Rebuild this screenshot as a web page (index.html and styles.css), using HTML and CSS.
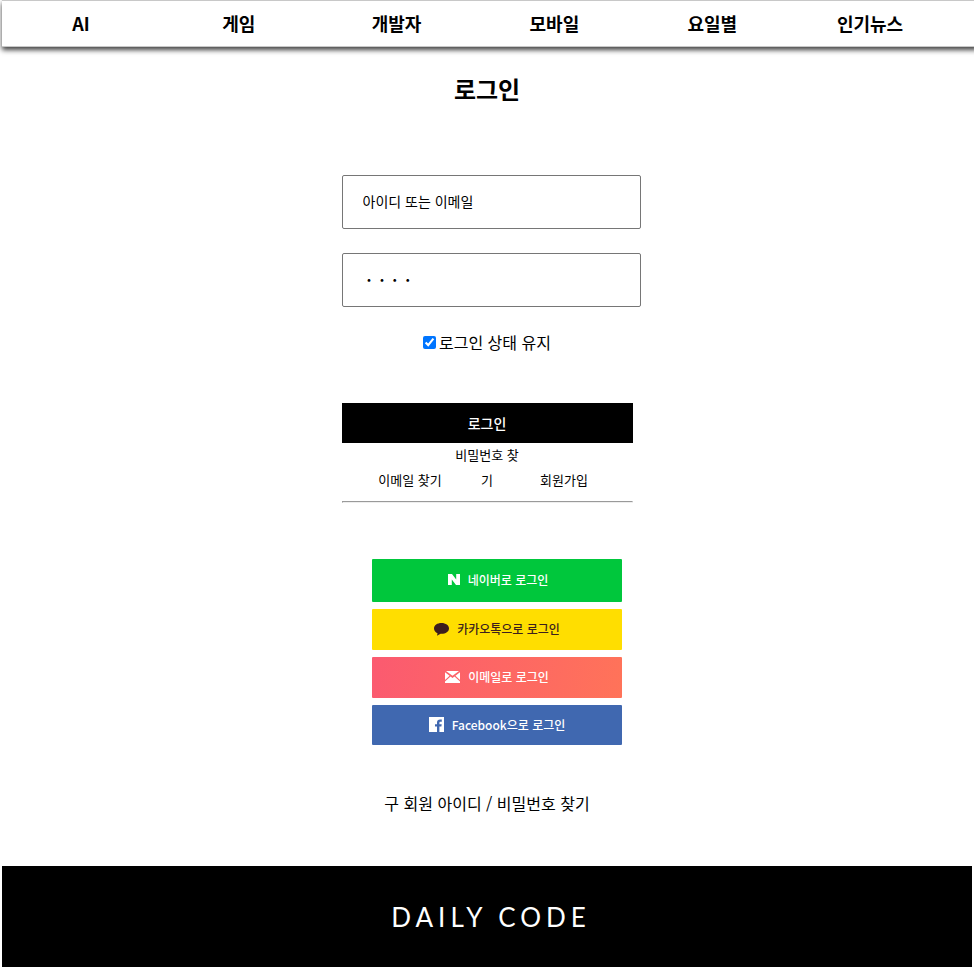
FILE: index.html
```html
<!DOCTYPE html>
<html lang="ko">
<head>
<meta charset="utf-8">
<meta name="viewport" content="width=device-width, initial-scale=1">
<title>로그인 - DAILY CODE</title>
<link rel="stylesheet" href="styles.css">
</head>
<body>
<nav class="nav">
  <a href="#">AI</a>
  <a href="#">게임</a>
  <a href="#">개발자</a>
  <a href="#">모바일</a>
  <a href="#">요일별</a>
  <a href="#">인기뉴스</a>
</nav>
<main class="main">
  <h1 class="title">로그인</h1>
  <form class="form">
    <input class="field" type="text" placeholder="아이디 또는 이메일" aria-label="아이디 또는 이메일">
    <input class="field field-password" type="password" placeholder="ㆍㆍㆍㆍ" aria-label="비밀번호">
    <div class="keep">
      <input id="keep" type="checkbox" checked>
      <label for="keep">로그인 상태 유지</label>
    </div>
    <button class="submit" type="submit">로그인</button>
    <div class="links">
      <a href="#">이메일 찾기</a>
      <a href="#">비밀번호 찾기</a>
      <a href="#">회원가입</a>
    </div>
    <hr class="rule">
  </form>
  <div class="social">
    <button class="naver" type="button">
      <svg width="12" height="11" viewBox="0 0 12 11" aria-hidden="true"><path fill="currentColor" d="M0 0h4l4.200 5.500V0H12v11H8L3.800 5.500V11H0z"/></svg>
      네이버로 로그인
    </button>
    <button class="kakao" type="button">
      <svg width="15" height="14" viewBox="0 0 15 14" aria-hidden="true"><path fill="currentColor" d="M7.500 1C3.300 1 0 3.200 0 6.400c0 2.100 1.400 3.900 3.500 4.800L3 13.800l3.600-2h.9c4.200 0 7.500-2.300 7.500-5.400S11.700 1 7.500 1z"/></svg>
      카카오톡으로 로그인
    </button>
    <button class="email" type="button">
      <svg width="15" height="12" viewBox="0 0 15 12" aria-hidden="true"><path fill="currentColor" d="M1 0h13l-6.500 4.800zM0 1.200l4.600 3.500L0 9zM15 1.200v7.800l-4.600-4.300zM5.500 5.500l2 1.400 2-1.400 5.500 5.100V12H0v-1.400z"/></svg>
      이메일로 로그인
    </button>
    <button class="facebook" type="button">
      <svg width="15" height="15" viewBox="0 0 15 15" aria-hidden="true"><path fill="currentColor" d="M0 0h15v15h-4.600V9.400h2l.3-2.200h-2.300V5.800c0-.7.300-1.100 1.100-1.100h1.300V2.600l-1.700-.1c-2 0-3.100 1.100-3.100 3v1.700H6v2.200h2V15H0z"/></svg>
      Facebook으로 로그인
    </button>
  </div>
  <a class="legacy" href="#">구 회원 아이디 / 비밀번호 찾기</a>
</main>
<footer class="footer">DAILY CODE</footer>
</body>
</html>
```

FILE: styles.css
```css
* {
  box-sizing: border-box;
}

body {
  margin: 0;
  overflow-x: hidden;
  background: #fff;
  color: #000;
  font-family: "Noto Sans CJK KR", sans-serif;
  font-size: 16px;
}

a {
  color: inherit;
  text-decoration: none;
}

button,
input {
  font-family: inherit;
}

.nav {
  display: grid;
  grid-template-columns: repeat(6, 1fr);
  margin: 0 -4px 0 2px;
  padding-right: 28px;
  border: 1px solid #c8c8c8;
  border-left: 0;
  box-shadow: 0 3px 5px rgba(0, 0, 0, 0.75);
  font-size: 18px;
  font-weight: 700;
  line-height: 45px;
  text-align: center;
}

.main {
  display: flex;
  flex-direction: column;
  align-items: center;
  margin: 0 2px;
}

.title {
  margin: 24px 0 68px;
  font-size: 24px;
  line-height: 36px;
}

.form {
  display: flex;
  flex-direction: column;
  width: 30%;
}

.field {
  width: calc(100% + 8px);
  height: 54px;
  margin-bottom: 24px;
  padding: 0 20px 2px;
  border: 1px solid #767676;
  border-radius: 2px;
  font-size: 14px;
}

.field-password {
  font-weight: 900;
}

.field::placeholder {
  color: #000;
  opacity: 1;
}

.keep {
  display: flex;
  justify-content: center;
  align-items: center;
  gap: 3px;
  margin-bottom: 50px;
  line-height: 22px;
}

.keep input {
  width: 13px;
  height: 13px;
  margin: 0;
}

.submit {
  height: 40px;
  border: 0;
  background: #000;
  color: #fff;
  font-size: 14px;
  font-weight: 500;
}

.links {
  display: flex;
  justify-content: center;
  align-items: flex-end;
  gap: 5px;
  margin-top: -1px;
  font-size: 13px;
  line-height: 25px;
  text-align: center;
}

.links a {
  width: 72px;
}

.rule {
  width: 100%;
  margin: 9px 0 56px;
}

.social {
  display: flex;
  flex-direction: column;
  gap: 7px;
  width: 250px;
  margin-left: 20px;
}

.social button {
  display: flex;
  justify-content: center;
  align-items: center;
  gap: 8px;
  height: 41px;
  padding: 0 0 2px;
  border: 0;
  border-radius: 1px;
  color: #fff;
  font-size: 12px;
  font-weight: 500;
}

.social .naver {
  height: 43px;
  padding-left: 2px;
  background: #00c73c;
}

.social .kakao {
  background: #ffde00;
  color: #3c1e1e;
}

.social .email {
  background: linear-gradient(100deg, #fb5a70, #ff7359);
}

.social .facebook {
  height: 40px;
  background: #4068b0;
}

.legacy {
  margin: 46px 0 50px;
  font-size: 16px;
  line-height: 25px;
}

.footer {
  margin: 0 2px;
  padding: 1px 0 0 8px;
  background: #000;
  color: #fff;
  font-family: Lato, sans-serif;
  font-size: 26px;
  letter-spacing: 5px;
  line-height: 100px;
  text-align: center;
}
```
